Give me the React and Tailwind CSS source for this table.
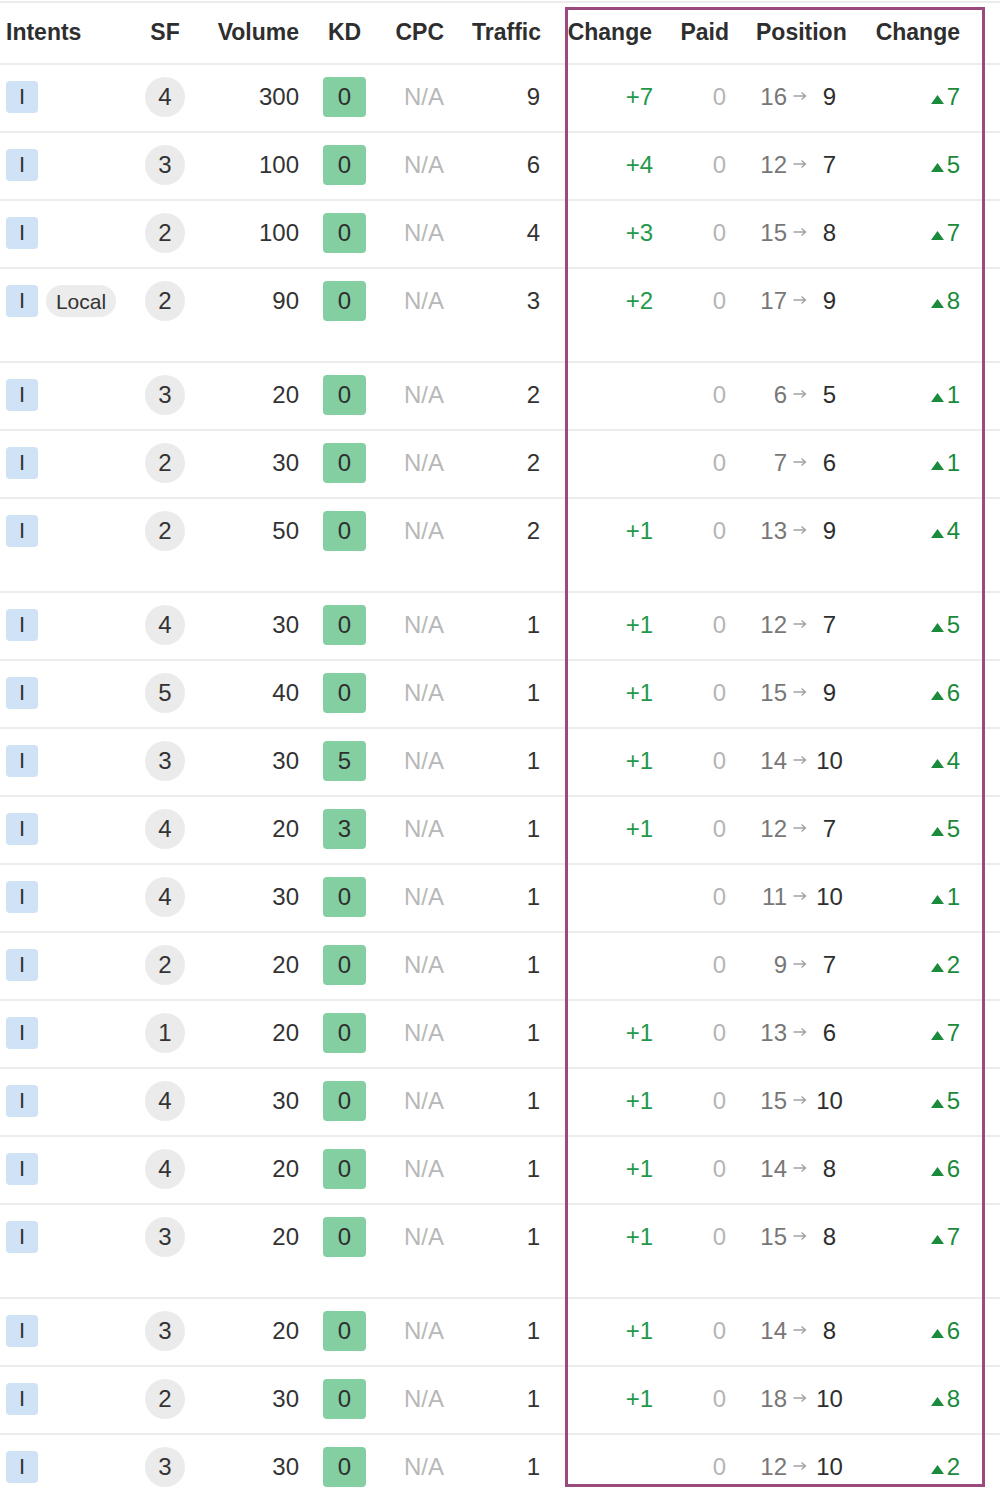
import React from 'react';

const rows = [
  { sf: 4, vol: 300, kd: 0, traffic: 9, chg: '+7', from: 16, to: 9, diff: 7 },
  { sf: 3, vol: 100, kd: 0, traffic: 6, chg: '+4', from: 12, to: 7, diff: 5 },
  { sf: 2, vol: 100, kd: 0, traffic: 4, chg: '+3', from: 15, to: 8, diff: 7 },
  { sf: 2, vol: 90, kd: 0, traffic: 3, chg: '+2', from: 17, to: 9, diff: 8, local: true, tall: true },
  { sf: 3, vol: 20, kd: 0, traffic: 2, chg: '', from: 6, to: 5, diff: 1 },
  { sf: 2, vol: 30, kd: 0, traffic: 2, chg: '', from: 7, to: 6, diff: 1 },
  { sf: 2, vol: 50, kd: 0, traffic: 2, chg: '+1', from: 13, to: 9, diff: 4, tall: true },
  { sf: 4, vol: 30, kd: 0, traffic: 1, chg: '+1', from: 12, to: 7, diff: 5 },
  { sf: 5, vol: 40, kd: 0, traffic: 1, chg: '+1', from: 15, to: 9, diff: 6 },
  { sf: 3, vol: 30, kd: 5, traffic: 1, chg: '+1', from: 14, to: 10, diff: 4 },
  { sf: 4, vol: 20, kd: 3, traffic: 1, chg: '+1', from: 12, to: 7, diff: 5 },
  { sf: 4, vol: 30, kd: 0, traffic: 1, chg: '', from: 11, to: 10, diff: 1 },
  { sf: 2, vol: 20, kd: 0, traffic: 1, chg: '', from: 9, to: 7, diff: 2 },
  { sf: 1, vol: 20, kd: 0, traffic: 1, chg: '+1', from: 13, to: 6, diff: 7 },
  { sf: 4, vol: 30, kd: 0, traffic: 1, chg: '+1', from: 15, to: 10, diff: 5 },
  { sf: 4, vol: 20, kd: 0, traffic: 1, chg: '+1', from: 14, to: 8, diff: 6 },
  { sf: 3, vol: 20, kd: 0, traffic: 1, chg: '+1', from: 15, to: 8, diff: 7, tall: true },
  { sf: 3, vol: 20, kd: 0, traffic: 1, chg: '+1', from: 14, to: 8, diff: 6 },
  { sf: 2, vol: 30, kd: 0, traffic: 1, chg: '+1', from: 18, to: 10, diff: 8 },
  { sf: 3, vol: 30, kd: 0, traffic: 1, chg: '', from: 12, to: 10, diff: 2 },
];

const grid = 'grid grid-cols-[130px_70px_105px_79px_66px_96px_114px_75px_135px_130px]';

const UpTriangle = () => (
  <svg width="13" height="9" viewBox="0 0 13 9" className="mt-[5px] mr-[3px]">
    <polygon points="6.5,0 13,9 0,9" fill="#1a8a3c" />
  </svg>
);

const Arrow = () => (
  <svg width="14" height="10" viewBox="0 0 14 10" className="mb-[3px]">
    <path d="M0.5 5H12.5M8.5 1.5L12.5 5L8.5 8.5" fill="none" stroke="#a3a3a3" strokeWidth="1.4" />
  </svg>
);

export default function App() {
  return (
    <div className="relative w-[1000px] bg-white pt-[1px] text-[#333] font-['Liberation_Sans',Arial,sans-serif]">
      <div className="border-t-2 border-[#ececec]">
        {/* Header */}
        <div className={`${grid} h-[62px] items-center border-b-2 border-[#ececec] pb-[2px] text-[23px] font-bold text-[#2e2e2e]`}>
          <div className="pl-[6px]">Intents</div>
          <div className="text-center">SF</div>
          <div className="text-right pr-[6px]">Volume</div>
          <div className="text-center">KD</div>
          <div className="text-right pr-[6px]">CPC</div>
          <div className="text-right pr-[5px]">Traffic</div>
          <div className="text-right pr-[8px]">Change</div>
          <div className="text-right pr-[6px]">Paid</div>
          <div className="pl-[21px]">Position</div>
          <div className="text-right pr-[40px]">Change</div>
        </div>

        {/* Rows */}
        {rows.map((r, i) => (
          <div
            key={i}
            className={`${grid} items-start border-b-2 border-[#ececec] pt-[12px] text-[24px] ${r.tall ? 'h-[94px]' : 'h-[68px]'}`}
          >
            <div className="flex h-[40px] items-center gap-[8px] pl-[6px]">
              <span className="flex h-[32px] w-[32px] items-center justify-center rounded-[4px] bg-[#cfe2f6] text-[22px] leading-none text-[#333]">I</span>
              {r.local && (
                <span className="flex h-[32px] w-[70px] items-center justify-center rounded-full bg-[#ececec] text-[21px] leading-none text-[#333]">Local</span>
              )}
            </div>
            <div className="flex h-[40px] items-center justify-center">
              <span className="flex h-[40px] w-[40px] items-center justify-center rounded-full bg-[#ebebeb] leading-none">{r.sf}</span>
            </div>
            <div className="flex h-[40px] items-center justify-end pr-[6px] leading-none">{r.vol}</div>
            <div className="flex h-[40px] items-center justify-center">
              <span className="flex h-[40px] w-[43px] items-center justify-center rounded-[4px] bg-[#84cfa2] leading-none text-[#2e2e2e]">{r.kd}</span>
            </div>
            <div className="flex h-[40px] items-center justify-end pr-[6px] leading-none text-[#b8b8b8]">N/A</div>
            <div className="flex h-[40px] items-center justify-end pr-[6px] leading-none">{r.traffic}</div>
            <div className="flex h-[40px] items-center justify-end pr-[7px] leading-none text-[#22994a]">{r.chg}</div>
            <div className="flex h-[40px] items-center justify-end pr-[9px] leading-none text-[#b5b5b5]">0</div>
            <div className="flex h-[40px] items-center pl-[24px] leading-none">
              <span className="w-[28px] text-right text-[#777]">{r.from}</span>
              <span className="flex w-[26px] justify-center"><Arrow /></span>
              <span className="w-[33px] text-center text-[#2e2e2e]">{r.to}</span>
            </div>
            <div className="flex h-[40px] items-center justify-end pr-[40px] leading-none text-[#1a8a3c]">
              <UpTriangle />
              <span>{r.diff}</span>
            </div>
          </div>
        ))}
      </div>

      {/* Highlight box over the ranking columns */}
      <div className="pointer-events-none absolute left-[565px] top-[7px] h-[1480px] w-[420px] border-[3px] border-[#9b4a80]" />
    </div>
  );
}
